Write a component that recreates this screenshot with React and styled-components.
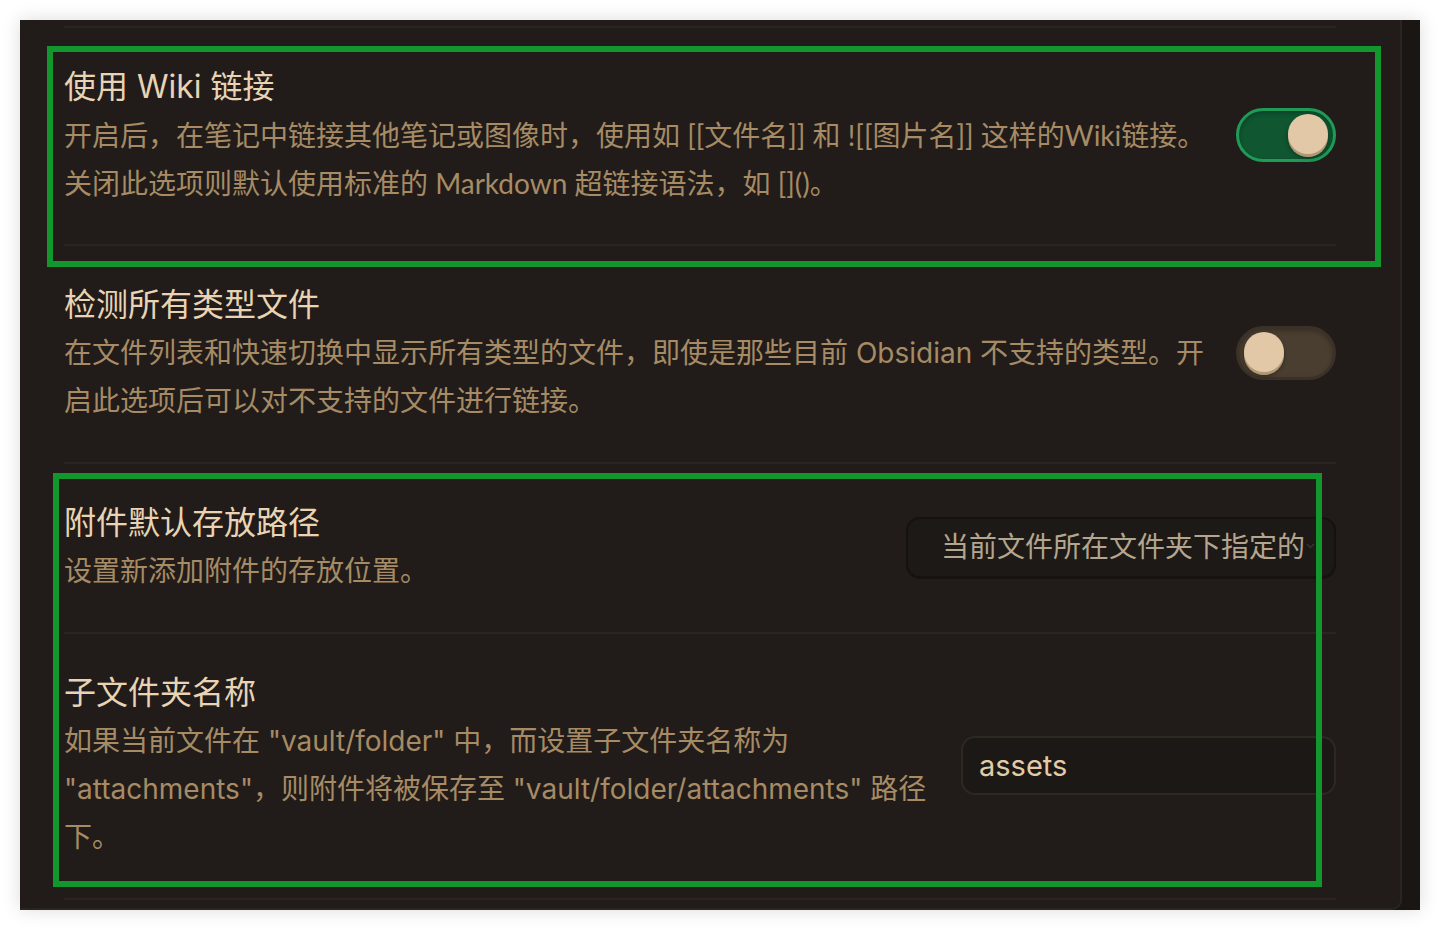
import React from "react";
import styled, { createGlobalStyle } from "styled-components";

const GlobalStyle = createGlobalStyle`
  html, body { margin: 0; padding: 0; background: #ffffff; }
  body {
    font-family: "Inter", "Noto Sans CJK SC", sans-serif;
    -webkit-font-smoothing: antialiased;
  }
  * { box-sizing: border-box; }
`;

const Page = styled.div`
  padding: 20px;
  width: 1440px;
  height: 930px;
`;

const Panel = styled.div`
  position: relative;
  width: 1400px;
  height: 890px;
  display: flex;
  background: #191613;
  overflow: hidden;
  box-shadow: 0 0 18px rgba(0, 0, 0, 0.14);
`;

const Content = styled.div`
  width: 1382px;
  flex: 0 0 1382px;
  height: 100%;
  background: #211c19;
  border-right: 2px solid #2b251f;
  border-bottom: 2px solid #2b251f;
  border-bottom-right-radius: 10px;
  padding: 6px 64px 0 44px;
`;

const List = styled.div`
  border-top: 2px solid #2a2520;
`;

const Row = styled.div`
  display: flex;
  align-items: center;
  padding: 35px 0 37px;
  border-bottom: 2px solid #2a2520;
`;

const Info = styled.div`
  flex: 1 1 auto;
  min-width: 0;
  margin-right: 24px;
`;

const Name = styled.div`
  font-size: 32px;
  line-height: 48px;
  color: #e8d4b5;
`;

const Desc = styled.div`
  font-family: ${(p) =>
    p.$geometric
      ? `"Lato", "Noto Sans CJK SC", sans-serif`
      : `"Inter", "Noto Sans CJK SC", sans-serif`};
  font-size: 28px;
  line-height: 48px;
  color: #a68b65;
`;

const Control = styled.div`
  flex: 0 0 auto;
  display: flex;
  justify-content: flex-end;
  align-items: center;
`;

const Track = styled.div`
  width: 100px;
  height: 54px;
  border-radius: 27px;
  display: flex;
  align-items: center;
  padding: 0 5px 2px;
  justify-content: ${(p) => (p.$on ? "flex-end" : "flex-start")};
  background: ${(p) => (p.$on ? "#0f5631" : "#4a3e31")};
  border: 3px solid ${(p) => (p.$on ? "#1f9a57" : "#3b3127")};
  box-shadow: inset 0 2px 4px rgba(0, 0, 0, 0.25);
`;

const Knob = styled.div`
  width: 40px;
  height: 40px;
  border-radius: 50%;
  background: #e2c8a6;
  box-shadow: 0 3px 0 #b09876, 0 4px 4px rgba(0, 0, 0, 0.35);
`;

const Dropdown = styled.div`
  width: 430px;
  height: 61px;
  border: 2px solid #151210;
  border-radius: 14px;
  background: #1d1916;
  display: flex;
  align-items: center;
  padding: 0 0 0 33px;
  box-shadow: 0 1px 0 rgba(0, 0, 0, 0.3);
`;

const DropText = styled.span`
  font-size: 28px;
  line-height: 40px;
  color: #b4a58e;
  white-space: nowrap;
`;

const Chevron = styled.svg`
  flex: 0 0 auto;
  margin-left: 1px;
  margin-top: -2px;
`;

const TextInput = styled.input`
  width: 375px;
  height: 59px;
  border: 2px solid #2e2821;
  border-radius: 14px;
  background: #1c1815;
  padding: 0 16px;
  font-family: inherit;
  font-size: 29px;
  color: #e2cba8;
  outline: none;
`;

const Highlight = styled.div`
  position: absolute;
  left: ${(p) => p.$left}px;
  top: ${(p) => p.$top}px;
  width: ${(p) => p.$width}px;
  height: ${(p) => p.$height}px;
  border: 6px solid #14962f;
  pointer-events: none;
`;

function Toggle({ on }) {
  return (
    <Track $on={on}>
      <Knob />
    </Track>
  );
}

export default function App() {
  return (
    <>
      <GlobalStyle />
      <Page>
        <Panel>
          <Content>
            <List>
              <Row>
                <Info>
                  <Name>使用 Wiki 链接</Name>
                  <Desc $geometric>
                    开启后，在笔记中链接其他笔记或图像时，使用如 [[文件名]] 和 ![[图片名]] 这样的Wiki链接。关闭此选项则默认使用标准的 Markdown 超链接语法，如 []()。
                  </Desc>
                </Info>
                <Control>
                  <Toggle on />
                </Control>
              </Row>
              <Row>
                <Info>
                  <Name>检测所有类型文件</Name>
                  <Desc>
                    在文件列表和快速切换中显示所有类型的文件，即使是那些目前 Obsidian 不支持的类型。开启此选项后可以对不支持的文件进行链接。
                  </Desc>
                </Info>
                <Control>
                  <Toggle on={false} />
                </Control>
              </Row>
              <Row>
                <Info>
                  <Name>附件默认存放路径</Name>
                  <Desc>设置新添加附件的存放位置。</Desc>
                </Info>
                <Control>
                  <Dropdown>
                    <DropText>当前文件所在文件夹下指定的</DropText>
                    <Chevron width="9" height="6" viewBox="0 0 9 6">
                      <path d="M1 1 L4.5 4.5 L8 1" fill="none" stroke="#3a342d" strokeWidth="1.4" />
                    </Chevron>
                  </Dropdown>
                </Control>
              </Row>
              <Row>
                <Info>
                  <Name>子文件夹名称</Name>
                  <Desc>
                    如果当前文件在 "vault/folder" 中，而设置子文件夹名称为 "attachments"，则附件将被保存至 "vault/folder/attachments" 路径下。
                  </Desc>
                </Info>
                <Control>
                  <TextInput readOnly value="assets" />
                </Control>
              </Row>
            </List>
          </Content>
          <Highlight $left={27} $top={26} $width={1334} $height={221} />
          <Highlight $left={33} $top={453} $width={1269} $height={414} />
        </Panel>
      </Page>
    </>
  );
}
